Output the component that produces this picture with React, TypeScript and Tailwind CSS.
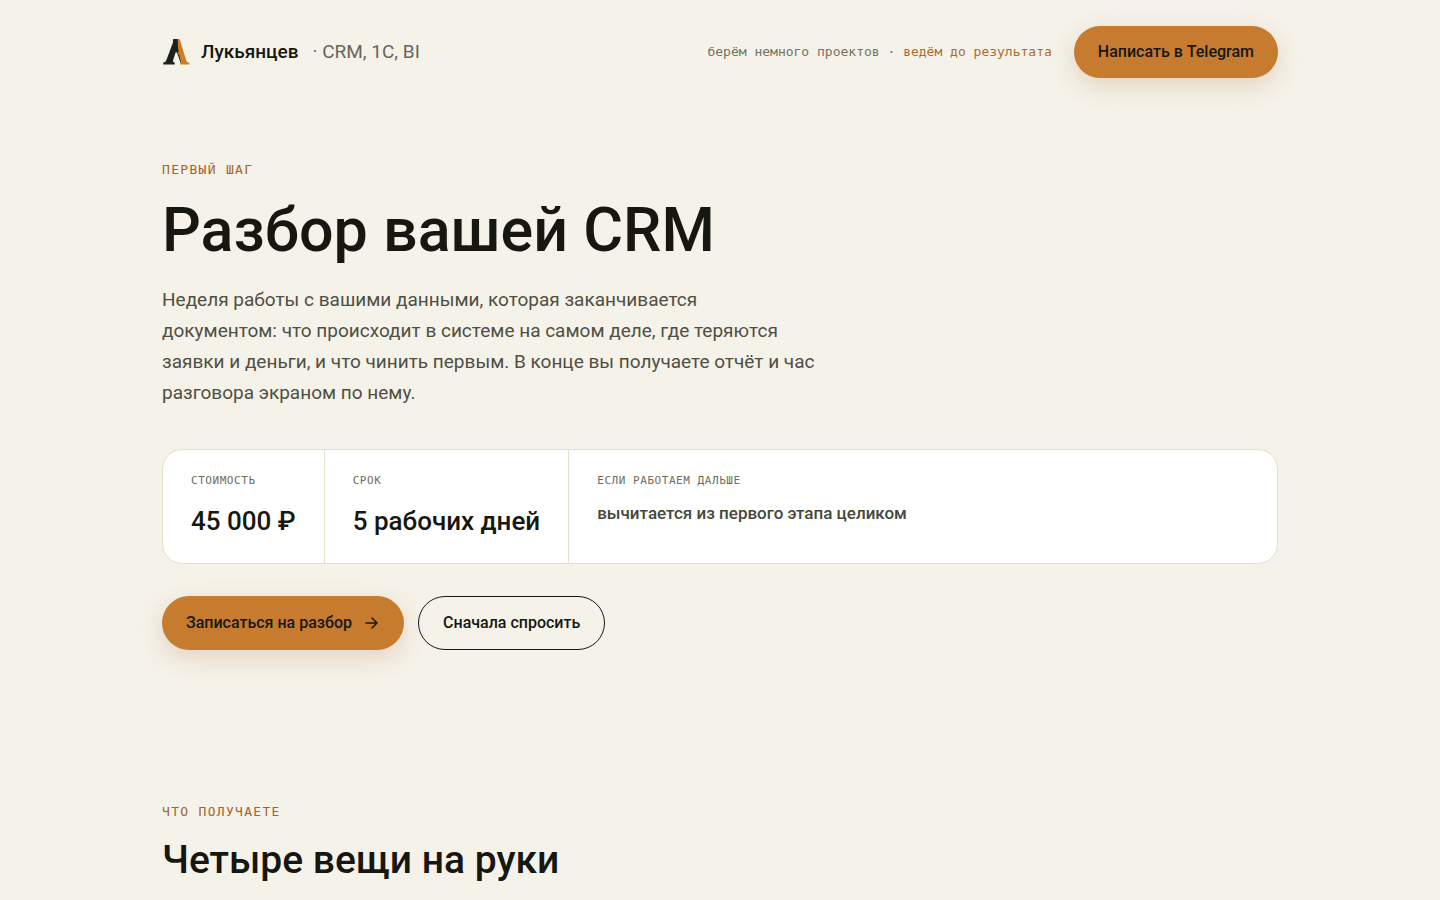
import type { ReactNode } from "react";

const facts = [
  { label: "Стоимость", value: "45 000 ₽" },
  { label: "Срок", value: "5 рабочих дней" },
];

function Logo() {
  return (
    <svg viewBox="0 0 28 28" className="size-7 shrink-0" aria-hidden="true">
      <path
        fill="#1d201d"
        d="M11.2 1h5.2l2.2 14.5 1.2 10-1.3-1.1-3.1-8.6-1.4-2.3-2.8 8.2c-.4 1.3-.2 2.4.6 2.6l.9.3v2H1.3v-2l1-.3c1.1-.3 1.7-1.1 2.1-2.300L11 4.600V2.900z"
      />
      <path
        fill="#d07c27"
        d="M15.600 1h2l6.700 21.500c.4 1.200 1 1.700 2 2l1.100.3v1.800H18.200v-1.700l1-.5-1.500-5-.3-2.200-1.600-1.500.8-2.600-.6-3.100z"
      />
    </svg>
  );
}

function Eyebrow({ children }: { children: ReactNode }) {
  return (
    <p className="font-['DejaVu_Sans_Mono','Liberation_Mono',monospace] text-[13px] leading-4 tracking-widest text-[#a9622a] uppercase">
      {children}
    </p>
  );
}

function FactLabel({ children }: { children: ReactNode }) {
  return (
    <dt className="font-['DejaVu_Sans_Mono','Liberation_Mono',monospace] text-[11px] leading-4 tracking-wider text-[#6e6d5c] uppercase">
      {children}
    </dt>
  );
}

export default function App() {
  return (
    <div className="min-h-screen bg-[#f5f2e9] font-['Roboto','Noto_Sans',sans-serif] text-[#171712]">
      <div className="mx-auto max-w-[1180px] px-8">
        <header className="flex items-center justify-between py-[26px]">
          <a href="#top" className="flex items-center">
            <Logo />
            <span className="ml-[11px] text-[19px] leading-7 font-medium">Лукьянцев</span>
            <span className="ml-[14px] text-[19px] leading-7 text-[#66665a]">· CRM, 1С, BI</span>
          </a>
          <div className="flex items-center gap-[22px]">
            <p className="font-['DejaVu_Sans_Mono','Liberation_Mono',monospace] text-[13px] leading-5 text-[#74735f]">
              берём немного проектов · <span className="text-[#b06a2c]">ведём до результата</span>
            </p>
            <a
              href="#telegram"
              className="flex h-[52px] items-center rounded-full bg-[#c77b2f] px-6 text-base font-medium shadow-[0_8px_24px_rgba(160,90,30,0.2)]"
            >
              Написать в Telegram
            </a>
          </div>
        </header>

        <main id="top">
          <section className="pt-[58px]">
            <Eyebrow>Первый шаг</Eyebrow>
            <h1 className="mt-4 text-[61px] leading-[72px] font-medium">Разбор вашей CRM</h1>
            <p className="mt-[18px] max-w-[660px] text-[19px] leading-[31px] text-[#4f4f42]">
              Неделя работы с вашими данными, которая заканчивается
              <br />
              документом: что происходит в системе на самом деле, где теряются заявки и деньги, и что чинить первым.
              В конце вы получаете отчёт и час разговора экраном по нему.
            </p>

            <dl className="mt-[41px] flex overflow-hidden rounded-[20px] border border-[#e3dfc9] bg-white">
              {facts.map((fact) => (
                <div key={fact.label} className="border-r border-[#e3dfc9] px-7 pt-[23px] pb-6">
                  <FactLabel>{fact.label}</FactLabel>
                  <dd className="mt-[14px] text-[26px] leading-9 font-medium whitespace-nowrap">{fact.value}</dd>
                </div>
              ))}
              <div className="flex-1 px-7 pt-[23px] pb-6">
                <FactLabel>Если работаем дальше</FactLabel>
                <dd className="mt-[10px] text-[17px] leading-7 font-medium text-[#45473b]">
                  вычитается из первого этапа целиком
                </dd>
              </div>
            </dl>

            <div className="mt-8 flex gap-[14px]">
              <a
                href="#booking"
                className="flex h-[54px] items-center gap-3 rounded-full bg-[#c77b2f] px-6 text-base font-medium shadow-[0_8px_24px_rgba(160,90,30,0.2)]"
              >
                Записаться на разбор
                <svg
                  viewBox="0 0 16 16"
                  className="size-4"
                  fill="none"
                  stroke="currentColor"
                  strokeWidth="1.5"
                  strokeLinecap="round"
                  strokeLinejoin="round"
                  aria-hidden="true"
                >
                  <path d="M2 8h11M8 3l5 5-5 5" />
                </svg>
              </a>
              <a
                href="#question"
                className="flex h-[54px] items-center rounded-full border border-[#171712] px-6 text-base font-medium"
              >
                Сначала спросить
              </a>
            </div>
          </section>

          <section className="pt-[154px]">
            <Eyebrow>Что получаете</Eyebrow>
            <h2 className="mt-4 text-[39px] leading-[48px] font-medium">Четыре вещи на руки</h2>
          </section>
        </main>
      </div>
    </div>
  );
}
